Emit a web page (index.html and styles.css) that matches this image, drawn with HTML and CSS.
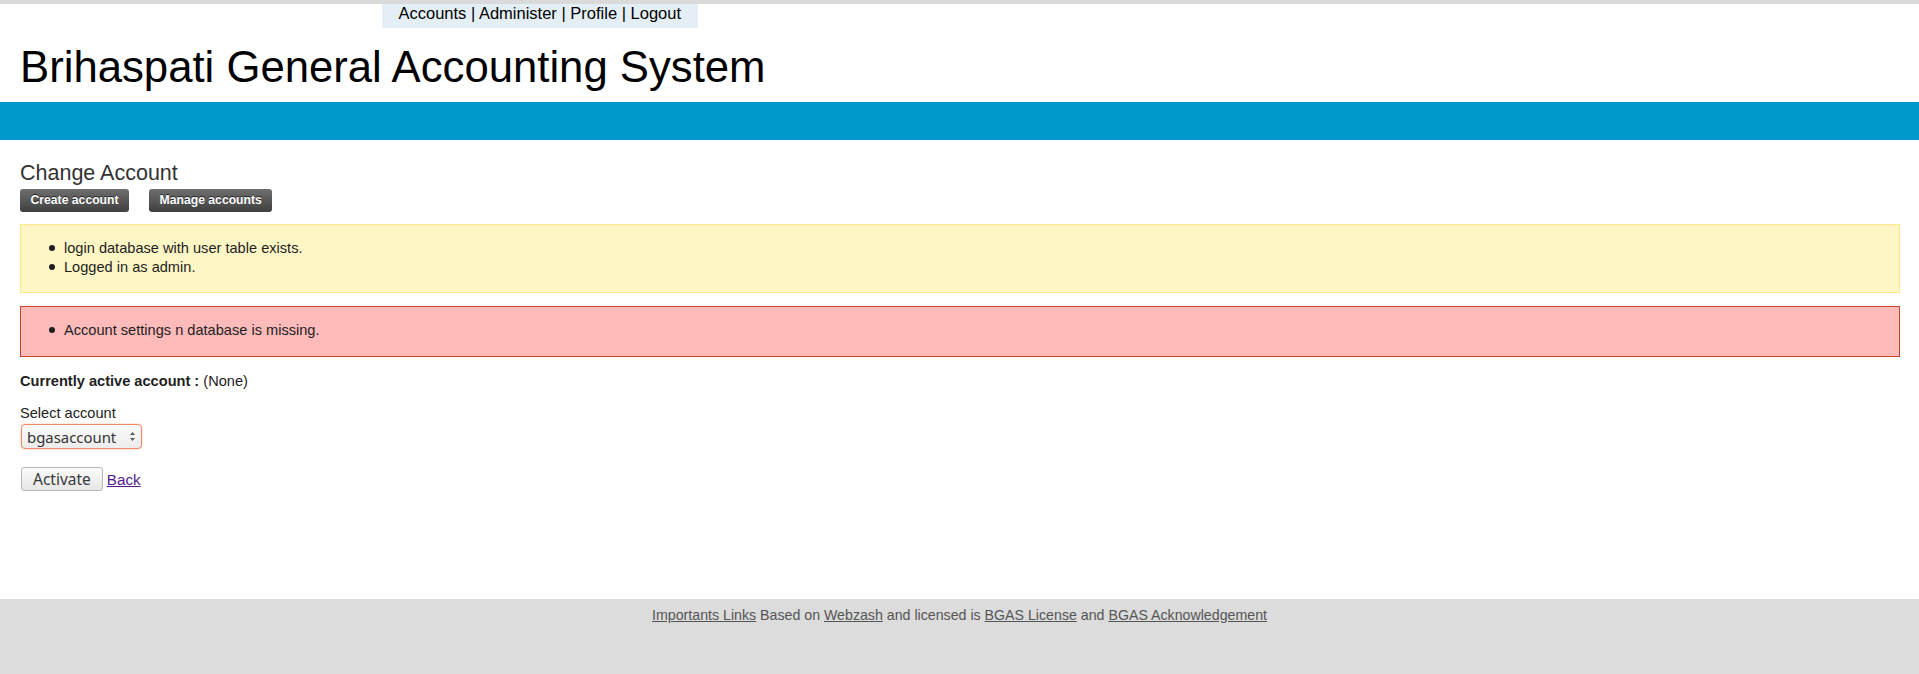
FILE: index.html
```html
<!DOCTYPE html>
<html lang="en">
<head>
<meta charset="utf-8">
<title>Brihaspati General Accounting System</title>
<link rel="stylesheet" href="styles.css">
</head>
<body>
<div class="topline"></div>
<header class="header">
  <nav class="nav">
    <a class="nav-link">Accounts</a> | <a class="nav-link">Administer</a> | <a class="nav-link">Profile</a> | <a class="nav-link">Logout</a>
  </nav>
  <h1 class="title">Brihaspati General Accounting System</h1>
</header>
<div class="bluebar"></div>
<main class="main">
  <h2 class="page-title">Change Account</h2>
  <div class="actions">
    <a class="dark-btn">Create account</a>
    <a class="dark-btn">Manage accounts</a>
  </div>
  <div class="alert alert-info">
    <ul class="alert-list">
      <li class="alert-item">login database with user table exists.</li>
      <li class="alert-item">Logged in as admin.</li>
    </ul>
  </div>
  <div class="alert alert-error">
    <ul class="alert-list">
      <li class="alert-item">Account settings n database is missing.</li>
    </ul>
  </div>
  <p class="active-line"><span class="strong">Currently active account :</span> (None)</p>
  <form class="account-form">
    <label class="field-label">Select account</label>
    <div class="select-wrap">
      <select class="select">
        <option>bgasaccount</option>
      </select>
      <svg class="select-arrows" width="7" height="11" viewBox="0 0 7 11"><path d="M3.5 1 L6 4 L1 4 Z" fill="#5a5a5a"/><path d="M1 7 L6 7 L3.5 10 Z" fill="#5a5a5a"/></svg>
    </div>
    <div class="submit-row">
      <button type="button" class="btn">Activate</button> <a class="back-link" href="#">Back</a>
    </div>
  </form>
</main>
<footer class="footer">
  <a class="foot-link">Importants Links</a> Based on <a class="foot-link">Webzash</a> and licensed is <a class="foot-link">BGAS License</a> and <a class="foot-link">BGAS Acknowledgement</a>
</footer>
</body>
</html>
```
FILE: styles.css
```css
html, body {
  margin: 0;
  padding: 0;
}
body {
  font-family: "Liberation Sans", Arial, sans-serif;
  font-size: 14.6px;
  color: #222;
  background: #fff;
  min-height: 100vh;
  display: flex;
  flex-direction: column;
}
.topline {
  height: 4px;
  background: #dadada;
}
.header {
  padding: 0 20px;
}
.nav {
  display: inline-block;
  margin-left: 362px;
  background: #e4eff5;
  padding: 0 16.5px 5px;
  font-size: 16.5px;
  line-height: 19px;
  color: #000;
}
.nav-link {
  color: #000;
  text-decoration: none;
}
.title {
  margin: 14px 0 10px;
  font-size: 43.7px;
  line-height: 50px;
  font-weight: normal;
  color: #000;
}
.bluebar {
  height: 38px;
  background: #0099cc;
}
.main {
  flex: 1;
  padding: 0 19px 0 20px;
}
.page-title {
  margin: 20.5px 0 4.5px;
  font-size: 21.5px;
  line-height: 24px;
  font-weight: normal;
  color: #333;
}
.actions {
  display: flex;
  gap: 20px;
}
.dark-btn {
  display: block;
  padding: 4px 10.5px;
  font-size: 12.2px;
  line-height: 15px;
  font-weight: bold;
  color: #fff;
  text-shadow: 0 -1px 0 #222;
  background: linear-gradient(#6f6f6f, #3f3f3f);
  border-radius: 3px;
}
.alert {
  margin-top: 12px;
  border: 1px solid;
  padding: 14px 0 16px 2px;
  line-height: 18.5px;
}
.alert-info {
  background: #fff6c6;
  border-color: #fde68c;
}
.alert-error {
  margin-top: 13px;
  background: #ffbaba;
  border-color: #c9452a;
}
.alert-list {
  margin: 0;
  padding-left: 41px;
  list-style: none;
  color: #1e1e1e;
}
.alert-item::before {
  content: "";
  display: inline-block;
  width: 6px;
  height: 6px;
  border-radius: 50%;
  background: #1e1e1e;
  margin: 0 9px 0 -15px;
  vertical-align: 2px;
}
.active-line {
  margin: 15.5px 0 0;
  line-height: 18.5px;
}
.strong {
  font-weight: bold;
}
.account-form {
  margin-top: 13.5px;
}
.field-label {
  display: block;
  line-height: 18.5px;
}
.select-wrap {
  position: relative;
  display: inline-block;
  margin-top: 1.5px;
  margin-left: 1px;
}
.select {
  appearance: none;
  -webkit-appearance: none;
  width: 121px;
  height: 25px;
  box-sizing: border-box;
  border: 1px solid #ec8b62;
  border-radius: 4px;
  box-shadow: 0 0 2px #f5b89c;
  background: linear-gradient(#fbfbfb, #ececec);
  font-family: "Noto Sans", "DejaVu Sans", sans-serif;
  font-size: 14.9px;
  color: #333;
  padding: 0 0 0 5px;
  outline: none;
}
.select-arrows {
  position: absolute;
  right: 6px;
  top: 7px;
  pointer-events: none;
}
.submit-row {
  margin-top: 17.5px;
  display: flex;
  align-items: center;
  gap: 4px;
}
.btn {
  height: 24px;
  box-sizing: border-box;
  margin: 0 0 0 1px;
  padding: 0 11px;
  border: 1px solid #b8b8b8;
  border-radius: 3px;
  background: linear-gradient(#fbfbfb, #e6e6e6);
  font-family: "Noto Sans", "DejaVu Sans", sans-serif;
  font-size: 15.5px;
  line-height: 20px;
  color: #3a3a3a;
}
.back-link {
  color: #551a8b;
  font-size: 15.2px;
  text-decoration: underline;
  position: relative;
  top: 1px;
}
.footer {
  height: 75px;
  box-sizing: border-box;
  padding-top: 8px;
  background: #dcdcdc;
  text-align: center;
  font-size: 14.2px;
  line-height: 17px;
  color: #555;
}
.foot-link {
  color: #555;
  text-decoration: underline;
}
```
